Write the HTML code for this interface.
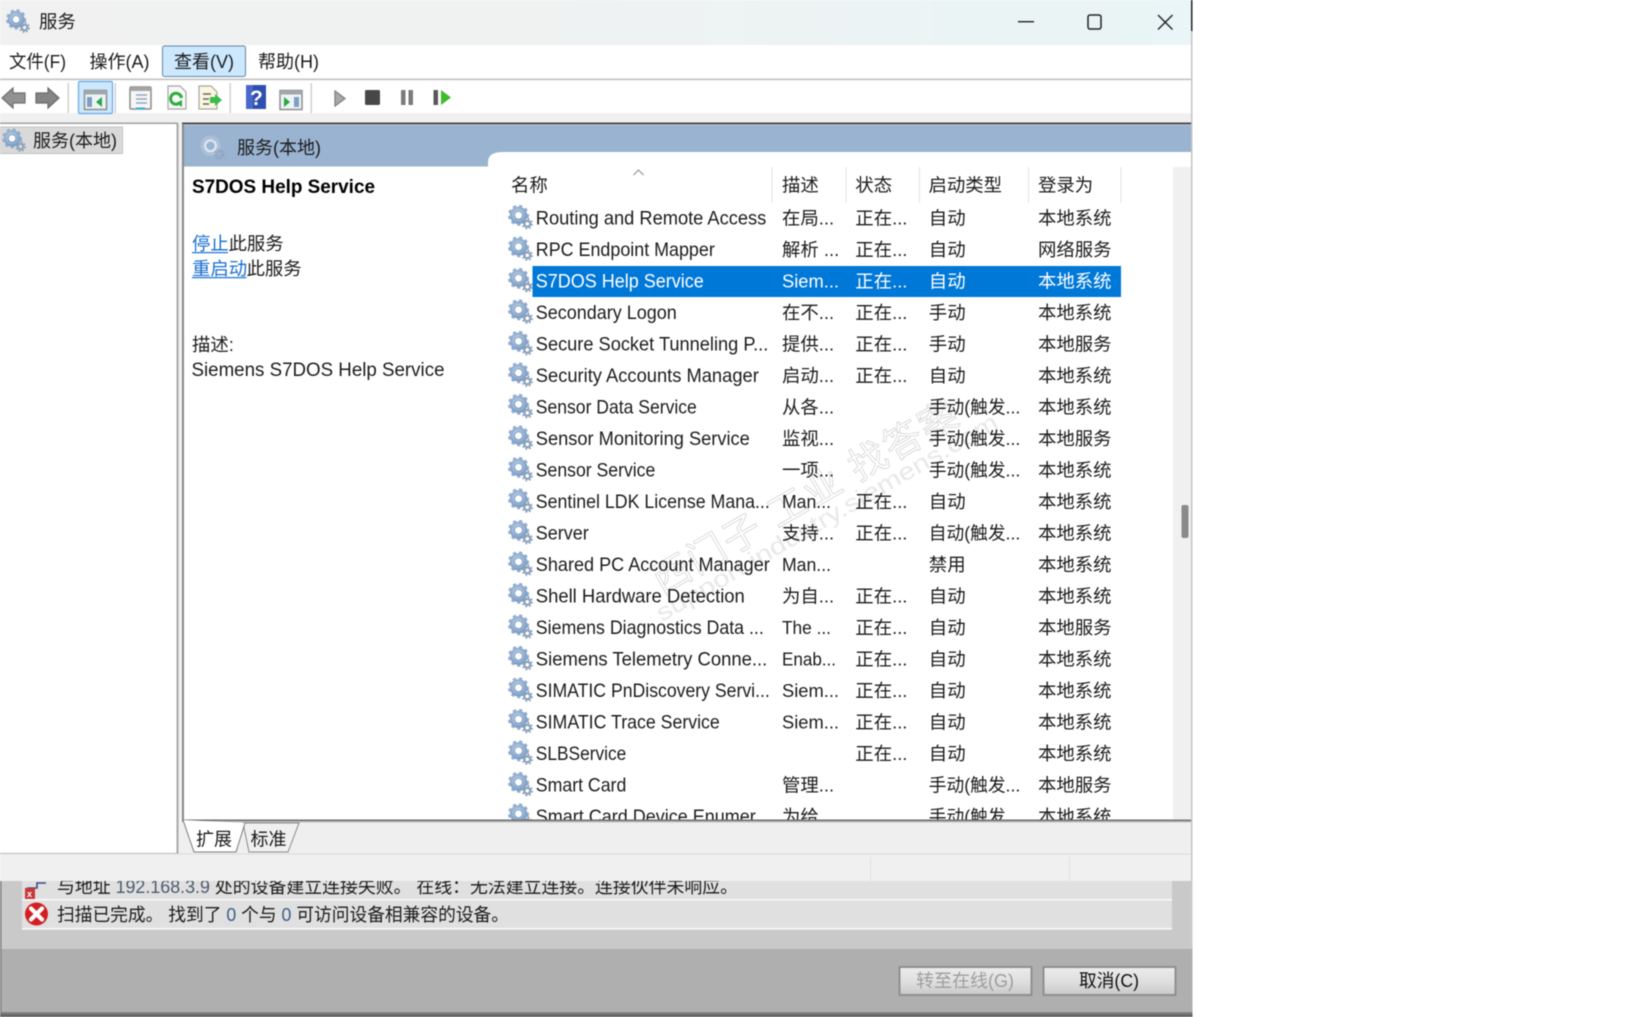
<!DOCTYPE html>
<html lang="zh">
<head>
<meta charset="utf-8">
<title>服务</title>
<style>
html,body{margin:0;padding:0;background:#fff;width:1628px;height:1017px;overflow:hidden}
svg{display:block;filter:blur(.4px)}
text{font-family:"Liberation Sans","Noto Sans CJK SC",sans-serif;font-size:18.4px;fill:#1c1c1c}
.n{font-size:19.4px}
.sel text{fill:#fff}
</style>
</head>
<body>
<svg xmlns="http://www.w3.org/2000/svg" width="1628" height="1017" viewBox="0 0 1628 1017">
<defs>
<linearGradient id="tb" x1="0" x2="1" y1="0" y2="0"><stop offset="0" stop-color="#f1f1f1"/><stop offset=".45" stop-color="#f0f2f2"/><stop offset="1" stop-color="#e9f5f6"/></linearGradient>
<linearGradient id="btn" x1="0" x2="0" y1="0" y2="1"><stop offset="0" stop-color="#ececec"/><stop offset=".5" stop-color="#e0e0e0"/><stop offset="1" stop-color="#c9c9c9"/></linearGradient>
<linearGradient id="bot" x1="0" x2="0" y1="0" y2="1"><stop offset="0" stop-color="#8a8a8a"/><stop offset="1" stop-color="#555"/></linearGradient>
<radialGradient id="gg" cx=".45" cy=".4" r=".7"><stop offset="0" stop-color="#cfdeee"/><stop offset="1" stop-color="#7c9cc4"/></radialGradient>
<symbol id="g" viewBox="0 0 25 25">
<circle cx="10.5" cy="10.8" r="9.3" fill="none" stroke="#93aecd" stroke-width="2.4" stroke-dasharray="3.2 3.1"/>
<circle cx="10.5" cy="10.8" r="6.6" fill="none" stroke="url(#gg)" stroke-width="4.2"/>
<circle cx="10.5" cy="10.8" r="4" fill="#fbfdff" stroke="#6f93bd" stroke-width=".9"/>
<circle cx="19.3" cy="19.3" r="4.7" fill="none" stroke="#8ea3bc" stroke-width="1.8" stroke-dasharray="1.9 1.8"/>
<circle cx="19.3" cy="19.3" r="2.9" fill="none" stroke="#8ba1bb" stroke-width="2.2"/>
</symbol>
<symbol id="gl" viewBox="0 0 25 25">
<circle cx="10.5" cy="10.8" r="8.4" fill="none" stroke="#aebfd6" stroke-width="3.4"/>
<circle cx="10.5" cy="10.8" r="5.4" fill="none" stroke="#d9e6f3" stroke-width="2.4"/>
<circle cx="19.3" cy="19.3" r="3.6" fill="none" stroke="#8fa3bb" stroke-width="3" stroke-dasharray="1.9 1.2"/>
</symbol>
<clipPath id="lc"><rect x="184" y="168" width="989" height="651.500"/></clipPath>
</defs>

<rect width="1628" height="1017" fill="#fff"/>

<!-- background dialog -->
<rect x="0" y="881" width="1192.500" height="68" fill="#c9c9c9"/>
<rect x="0" y="949" width="1192.500" height="63" fill="#afafaf"/>
<rect x="0" y="1012" width="1192.500" height="5" fill="url(#bot)"/>
<rect x="0" y="881" width="1.500" height="131" fill="#7d7d7d"/>
<rect x="22" y="881" width="1150" height="18" fill="#e0e0e0"/>
<rect x="22" y="899" width="1150" height="1.600" fill="#fafafa"/>
<rect x="22" y="900.600" width="1150" height="27.400" fill="#e0e0e0"/>
<rect x="22" y="928" width="1150" height="1.600" fill="#fafafa"/>
<path d="M28 891v-3h9v-5h9" fill="none" stroke="#3f4a86" stroke-width="1.600"/>
<rect x="25" y="888" width="10" height="11" fill="#c8383a"/>
<text x="27" y="897" style="font-size:9px;fill:#fff;font-weight:bold">x</text>
<circle cx="36.500" cy="914" r="11.500" fill="#d31f23"/>
<path d="M31 908.500l11 11M42 908.500l-11 11" stroke="#fff" stroke-width="4.200" stroke-linecap="round"/>
<text x="57" y="893" textLength="681" lengthAdjust="spacingAndGlyphs">与地址 <tspan style="fill:#4b5a6e">192.168.3.9</tspan> 处的设备建立连接失败。 在线：无法建立连接。连接伙伴未响应。</text>
<text x="57" y="921" textLength="452" lengthAdjust="spacingAndGlyphs">扫描已完成。 找到了 <tspan style="fill:#3c5f86">0</tspan> 个与 <tspan style="fill:#3c5f86">0</tspan> 可访问设备相兼容的设备。</text>
<rect x="899.500" y="967" width="132" height="28" fill="url(#btn)" stroke="#8f8f8f" stroke-width="2"/>
<rect x="1043.500" y="967" width="132" height="28" fill="url(#btn)" stroke="#8f8f8f" stroke-width="2"/>
<text x="916" y="987" textLength="98" lengthAdjust="spacingAndGlyphs" style="fill:#9d9d9d">转至在线(G)</text>
<text x="1079" y="987" textLength="60" lengthAdjust="spacingAndGlyphs" style="fill:#111">取消(C)</text>

<!-- window -->
<rect x="0" y="0" width="1191" height="881" fill="#f0f0f0"/>
<rect x="1191" y="0" width="1.500" height="881" fill="#c4c4c4"/>
<rect x="1190.500" y="0" width="2" height="31" fill="#222"/>
<rect x="0" y="0" width="1191" height="45" fill="url(#tb)"/>
<use href="#g" x="6" y="9" width="24" height="24"/>
<text x="39" y="28">服务</text>
<rect x="1018" y="21" width="16" height="1.400" fill="#222"/>
<rect x="1088" y="15" width="13" height="14" rx="2" fill="none" stroke="#222" stroke-width="1.500"/>
<path d="M1158 15l14.500 14.500M1172.500 15l-14.500 14.500" stroke="#222" stroke-width="1.400" fill="none"/>

<!-- menu -->
<rect x="0" y="45" width="1191" height="33.500" fill="#fff"/>
<rect x="0" y="78.500" width="1191" height="1.800" fill="#c4c4c4"/>
<rect x="162.500" y="46" width="83" height="30.500" rx="2" fill="#cce8ff" stroke="#5f84a3" stroke-width="1"/>
<text x="9" y="68" textLength="57" lengthAdjust="spacingAndGlyphs">文件(F)</text>
<text x="89.500" y="68" textLength="60" lengthAdjust="spacingAndGlyphs">操作(A)</text>
<text x="174" y="68" textLength="60" lengthAdjust="spacingAndGlyphs">查看(V)</text>
<text x="258" y="68" textLength="61" lengthAdjust="spacingAndGlyphs">帮助(H)</text>

<!-- toolbar -->
<rect x="0" y="80.300" width="1191" height="32.700" fill="#fff"/>
<rect x="0" y="113" width="1191" height="10" fill="#f0f0f0"/>
<path d="M2 98l11-10v5h12v10H13v5z" fill="#929292" stroke="#6f6f6f" stroke-width="1.200"/>
<path d="M59 98L48 88v5H36v10h12v5z" fill="#858585" stroke="#6a6a6a" stroke-width="1.200"/>
<rect x="67.500" y="83" width="1.500" height="30" fill="#d2d2d2"/>
<rect x="78.500" y="81.500" width="34" height="32" rx="1.500" fill="#cce8ff" stroke="#63a8e6" stroke-width="1.200"/>
<rect x="84.500" y="90.500" width="22" height="19" fill="#eef3f6" stroke="#8d8d8d" stroke-width="1.500"/>
<rect x="84.500" y="90.500" width="22" height="4" fill="#a2a7ab"/>
<rect x="87" y="97" width="5" height="10" fill="#7c9fc6"/>
<path d="M102 97v10l-6-5z" fill="#28a745"/>
<rect x="114.500" y="83" width="1.500" height="30" fill="#d2d2d2"/>
<rect x="130" y="87" width="21" height="22" rx="1" fill="#f6f6f6" stroke="#8b8b8b" stroke-width="1.500"/>
<rect x="130" y="87" width="21" height="4" fill="#a4a4a4"/>
<path d="M136 95h11M136 99h11M136 103h11" stroke="#8fa6c2" stroke-width="1.500"/>
<rect x="136" y="107.500" width="9" height="2" fill="#39a9e0"/>
<path d="M168 86h12l6 6v17h-18z" fill="#f8f8f8" stroke="#a5a5a5" stroke-width="1.200"/>
<path d="M181.500 98a5.500 5.500 0 1 0-2 5" fill="none" stroke="#2fae3d" stroke-width="3"/>
<path d="M176 103l6 4v-7z" fill="#2fae3d"/>
<path d="M199 86h12l6 6v17h-18z" fill="#fbf6df" stroke="#a5a5a5" stroke-width="1.200"/>
<path d="M203 94h8M203 99h6M203 104h6" stroke="#666" stroke-width="1.400"/>
<path d="M210 97h5v-3l7 6-7 6v-3h-5z" fill="#3dbb4a"/>
<rect x="229.500" y="83" width="1.500" height="30" fill="#d2d2d2"/>
<rect x="246" y="85" width="20" height="24" fill="#2f4fb0"/>
<rect x="246" y="85" width="7" height="24" fill="#4967c8"/>
<text x="250" y="105" style="font-size:21px;font-weight:bold;fill:#fff">?</text>
<rect x="280" y="90.500" width="22" height="19" fill="#eef3f6" stroke="#8d8d8d" stroke-width="1.500"/>
<rect x="280" y="90.500" width="22" height="4" fill="#a2a7ab"/>
<path d="M284 97v10l6-5z" fill="#28a745"/>
<rect x="294" y="97" width="5" height="10" fill="#7c9fc6"/>
<rect x="310.500" y="83" width="1.500" height="30" fill="#d2d2d2"/>
<path d="M335 91l10 7.500-10 7.500z" fill="#a9a9a9" stroke="#808080" stroke-width="1.300"/>
<rect x="365" y="90" width="15" height="15" rx="1.500" fill="#474747"/>
<rect x="401" y="90" width="4.500" height="15" fill="#7b7b7b"/>
<rect x="408.500" y="90" width="4.500" height="15" fill="#7b7b7b"/>
<rect x="433.500" y="90" width="4.500" height="15" fill="#585858"/>
<path d="M441 90l10 7.500-10 7.500z" fill="#3dbb2d"/>

<!-- left pane -->
<rect x="0" y="123.500" width="178" height="734" fill="#fff"/>
<rect x="176.500" y="123.500" width="2" height="730" fill="#a9a9a9"/>
<rect x="0" y="122.500" width="178" height="1.500" fill="#a0a0a0"/>
<rect x="0" y="853" width="178" height="1.500" fill="#a5a5a5"/>
<rect x="0" y="127" width="122.500" height="26.500" fill="#d9d9d9" stroke="#c4c4c4" stroke-width="1"/>
<use href="#g" x="2" y="128" width="24" height="24"/>
<text x="33" y="147" textLength="84" lengthAdjust="spacingAndGlyphs">服务(本地)</text>

<!-- right pane -->
<rect x="182.500" y="123" width="1008.500" height="697" fill="#fff"/>
<rect x="182" y="122.500" width="1009" height="2" fill="#4c4c4c"/>
<rect x="182" y="124" width="2" height="696" fill="#8a8a8a"/>
<path d="M184 125h1007v27H503q-15 0-15 10v4.500H184z" fill="#99b3d1"/>
<use href="#gl" x="200" y="135" width="25" height="25"/>
<text x="237" y="154" textLength="84" lengthAdjust="spacingAndGlyphs">服务(本地)</text>
<text x="192" y="193" textLength="183" lengthAdjust="spacingAndGlyphs" style="font-weight:bold;fill:#000;font-size:19.4px">S7DOS Help Service</text>
<text x="192" y="250" style="fill:#1a6fd0">停止</text><text x="228.500" y="250">此服务</text>
<rect x="192" y="252" width="36" height="1.200" fill="#1a6fd0"/>
<text x="192" y="275" style="fill:#1a6fd0">重启动</text><text x="246.500" y="275">此服务</text>
<rect x="192" y="277" width="54.500" height="1.200" fill="#1a6fd0"/>
<text x="192" y="351">描述:</text>
<text x="191.500" y="376" textLength="253" lengthAdjust="spacingAndGlyphs" class="n">Siemens S7DOS Help Service</text>

<!-- scrollbar -->
<rect x="1173" y="167" width="18" height="652" fill="#f0f0f0"/>
<rect x="1181.500" y="505" width="7" height="33" rx="2" fill="#8a8a8a"/>

<!-- watermark -->
<g>
<text transform="translate(662,595) rotate(-30)" textLength="345" lengthAdjust="spacing" style="font-size:38px;fill:none;stroke:#cfcfcf;stroke-width:.7px">西门子 工业 找答案</text>
<text transform="translate(662,622) rotate(-30)" textLength="390" lengthAdjust="spacingAndGlyphs" style="font-size:24px;fill:#d6d6d6;fill-opacity:.55">support.industry.siemens.com</text>
</g>

<!-- list header -->
<path d="M772 167v36M846 167v36M919.500 167v36M1028.500 167v36M1121 167v36" stroke="#e4e4e4" stroke-width="1"/>
<path d="M633.500 175l5-5 5 5" fill="none" stroke="#8d8d8d" stroke-width="1.100"/>
<text x="511" y="191.500">名称</text>
<text x="782" y="191.500">描述</text>
<text x="855.300" y="191.500">状态</text>
<text x="928.500" y="191.500">启动类型</text>
<text x="1038" y="191.500">登录为</text>

<rect x="532.500" y="266" width="588.500" height="31" fill="#0078d7"/>

<g clip-path="url(#lc)">
<g transform="translate(0,224.500)"><use href="#g" x="508" y="-20" width="25" height="25"/><text class="n" x="535.800" textLength="230.500" lengthAdjust="spacingAndGlyphs">Routing and Remote Access</text><text x="782">在局...</text><text x="855.300">正在...</text><text x="928.800">自动</text><text x="1038">本地系统</text></g>
<g transform="translate(0,256)"><use href="#g" x="508" y="-20" width="25" height="25"/><text class="n" x="535.800" textLength="179" lengthAdjust="spacingAndGlyphs">RPC Endpoint Mapper</text><text x="782">解析 ...</text><text x="855.300">正在...</text><text x="928.800">自动</text><text x="1038">网络服务</text></g>
<g transform="translate(0,287.500)" class="sel"><use href="#g" x="508" y="-20" width="25" height="25"/><text class="n" x="535.800" textLength="168" lengthAdjust="spacingAndGlyphs">S7DOS Help Service</text><text x="782" textLength="57" lengthAdjust="spacingAndGlyphs">Siem...</text><text x="855.300">正在...</text><text x="928.800">自动</text><text x="1038">本地系统</text></g>
<g transform="translate(0,319)"><use href="#g" x="508" y="-20" width="25" height="25"/><text class="n" x="535.800" textLength="141" lengthAdjust="spacingAndGlyphs">Secondary Logon</text><text x="782">在不...</text><text x="855.300">正在...</text><text x="928.800">手动</text><text x="1038">本地系统</text></g>
<g transform="translate(0,350.500)"><use href="#g" x="508" y="-20" width="25" height="25"/><text class="n" x="535.800" textLength="232.500" lengthAdjust="spacingAndGlyphs">Secure Socket Tunneling P...</text><text x="782">提供...</text><text x="855.300">正在...</text><text x="928.800">手动</text><text x="1038">本地服务</text></g>
<g transform="translate(0,382)"><use href="#g" x="508" y="-20" width="25" height="25"/><text class="n" x="535.800" textLength="223" lengthAdjust="spacingAndGlyphs">Security Accounts Manager</text><text x="782">启动...</text><text x="855.300">正在...</text><text x="928.800">自动</text><text x="1038">本地系统</text></g>
<g transform="translate(0,413.500)"><use href="#g" x="508" y="-20" width="25" height="25"/><text class="n" x="535.800" textLength="161" lengthAdjust="spacingAndGlyphs">Sensor Data Service</text><text x="782">从各...</text><text x="928.800" textLength="91.500" lengthAdjust="spacingAndGlyphs">手动(触发...</text><text x="1038">本地系统</text></g>
<g transform="translate(0,445)"><use href="#g" x="508" y="-20" width="25" height="25"/><text class="n" x="535.800" textLength="214" lengthAdjust="spacingAndGlyphs">Sensor Monitoring Service</text><text x="782">监视...</text><text x="928.800" textLength="91.500" lengthAdjust="spacingAndGlyphs">手动(触发...</text><text x="1038">本地服务</text></g>
<g transform="translate(0,476.500)"><use href="#g" x="508" y="-20" width="25" height="25"/><text class="n" x="535.800" textLength="119.500" lengthAdjust="spacingAndGlyphs">Sensor Service</text><text x="782">一项...</text><text x="928.800" textLength="91.500" lengthAdjust="spacingAndGlyphs">手动(触发...</text><text x="1038">本地系统</text></g>
<g transform="translate(0,508)"><use href="#g" x="508" y="-20" width="25" height="25"/><text class="n" x="535.800" textLength="234" lengthAdjust="spacingAndGlyphs">Sentinel LDK License Mana...</text><text x="782" textLength="49" lengthAdjust="spacingAndGlyphs">Man...</text><text x="855.300">正在...</text><text x="928.800">自动</text><text x="1038">本地系统</text></g>
<g transform="translate(0,539.500)"><use href="#g" x="508" y="-20" width="25" height="25"/><text class="n" x="535.800" textLength="53" lengthAdjust="spacingAndGlyphs">Server</text><text x="782">支持...</text><text x="855.300">正在...</text><text x="928.800" textLength="91.500" lengthAdjust="spacingAndGlyphs">自动(触发...</text><text x="1038">本地系统</text></g>
<g transform="translate(0,571)"><use href="#g" x="508" y="-20" width="25" height="25"/><text class="n" x="535.800" textLength="234" lengthAdjust="spacingAndGlyphs">Shared PC Account Manager</text><text x="782" textLength="49" lengthAdjust="spacingAndGlyphs">Man...</text><text x="928.800">禁用</text><text x="1038">本地系统</text></g>
<g transform="translate(0,602.500)"><use href="#g" x="508" y="-20" width="25" height="25"/><text class="n" x="535.800" textLength="209" lengthAdjust="spacingAndGlyphs">Shell Hardware Detection</text><text x="782">为自...</text><text x="855.300">正在...</text><text x="928.800">自动</text><text x="1038">本地系统</text></g>
<g transform="translate(0,634)"><use href="#g" x="508" y="-20" width="25" height="25"/><text class="n" x="535.800" textLength="228" lengthAdjust="spacingAndGlyphs">Siemens Diagnostics Data ...</text><text x="782" textLength="49" lengthAdjust="spacingAndGlyphs">The ...</text><text x="855.300">正在...</text><text x="928.800">自动</text><text x="1038">本地服务</text></g>
<g transform="translate(0,665.500)"><use href="#g" x="508" y="-20" width="25" height="25"/><text class="n" x="535.800" textLength="231.500" lengthAdjust="spacingAndGlyphs">Siemens Telemetry Conne...</text><text x="782" textLength="54" lengthAdjust="spacingAndGlyphs">Enab...</text><text x="855.300">正在...</text><text x="928.800">自动</text><text x="1038">本地系统</text></g>
<g transform="translate(0,697)"><use href="#g" x="508" y="-20" width="25" height="25"/><text class="n" x="535.800" textLength="234" lengthAdjust="spacingAndGlyphs">SIMATIC PnDiscovery Servi...</text><text x="782" textLength="57" lengthAdjust="spacingAndGlyphs">Siem...</text><text x="855.300">正在...</text><text x="928.800">自动</text><text x="1038">本地系统</text></g>
<g transform="translate(0,728.500)"><use href="#g" x="508" y="-20" width="25" height="25"/><text class="n" x="535.800" textLength="184" lengthAdjust="spacingAndGlyphs">SIMATIC Trace Service</text><text x="782" textLength="57" lengthAdjust="spacingAndGlyphs">Siem...</text><text x="855.300">正在...</text><text x="928.800">自动</text><text x="1038">本地系统</text></g>
<g transform="translate(0,760)"><use href="#g" x="508" y="-20" width="25" height="25"/><text class="n" x="535.800" textLength="90.500" lengthAdjust="spacingAndGlyphs">SLBService</text><text x="855.300">正在...</text><text x="928.800">自动</text><text x="1038">本地系统</text></g>
<g transform="translate(0,791.500)"><use href="#g" x="508" y="-20" width="25" height="25"/><text class="n" x="535.800" textLength="90.500" lengthAdjust="spacingAndGlyphs">Smart Card</text><text x="782">管理...</text><text x="928.800" textLength="91.500" lengthAdjust="spacingAndGlyphs">手动(触发...</text><text x="1038">本地服务</text></g>
<g transform="translate(0,823)"><use href="#g" x="508" y="-20" width="25" height="25"/><text class="n" x="535.800" textLength="220" lengthAdjust="spacingAndGlyphs">Smart Card Device Enumer</text><text x="782">为给...</text><text x="928.800" textLength="91.500" lengthAdjust="spacingAndGlyphs">手动(触发...</text><text x="1038">本地系统</text></g>
</g>

<!-- tab strip -->
<rect x="182" y="819.500" width="1009" height="1.500" fill="#6e6e6e"/>
<rect x="182" y="821" width="1009" height="1.500" fill="#bdbdbd"/>
<rect x="182" y="822.500" width="1009" height="31" fill="#efefef"/>
<path d="M243 823l6 29h39l11-29z" fill="#f0f0f0" stroke="#8a8a8a" stroke-width="1"/>
<path d="M183 820l11 32h42l9-29" fill="#fff" stroke="#7b7b7b" stroke-width="1"/>
<text x="196" y="845.500" textLength="36" lengthAdjust="spacingAndGlyphs">扩展</text>
<text x="250.500" y="845.500" textLength="36" lengthAdjust="spacingAndGlyphs">标准</text>

<!-- status bar -->
<rect x="0" y="853.500" width="1191" height="1.200" fill="#dcdcdc"/>
<rect x="0" y="854.700" width="1191" height="26.300" fill="#f0f0f0"/>
<rect x="870" y="857" width="1" height="24" fill="#e0e0e0"/>
<rect x="1069" y="857" width="1" height="24" fill="#e0e0e0"/>
</svg>
</body>
</html>
